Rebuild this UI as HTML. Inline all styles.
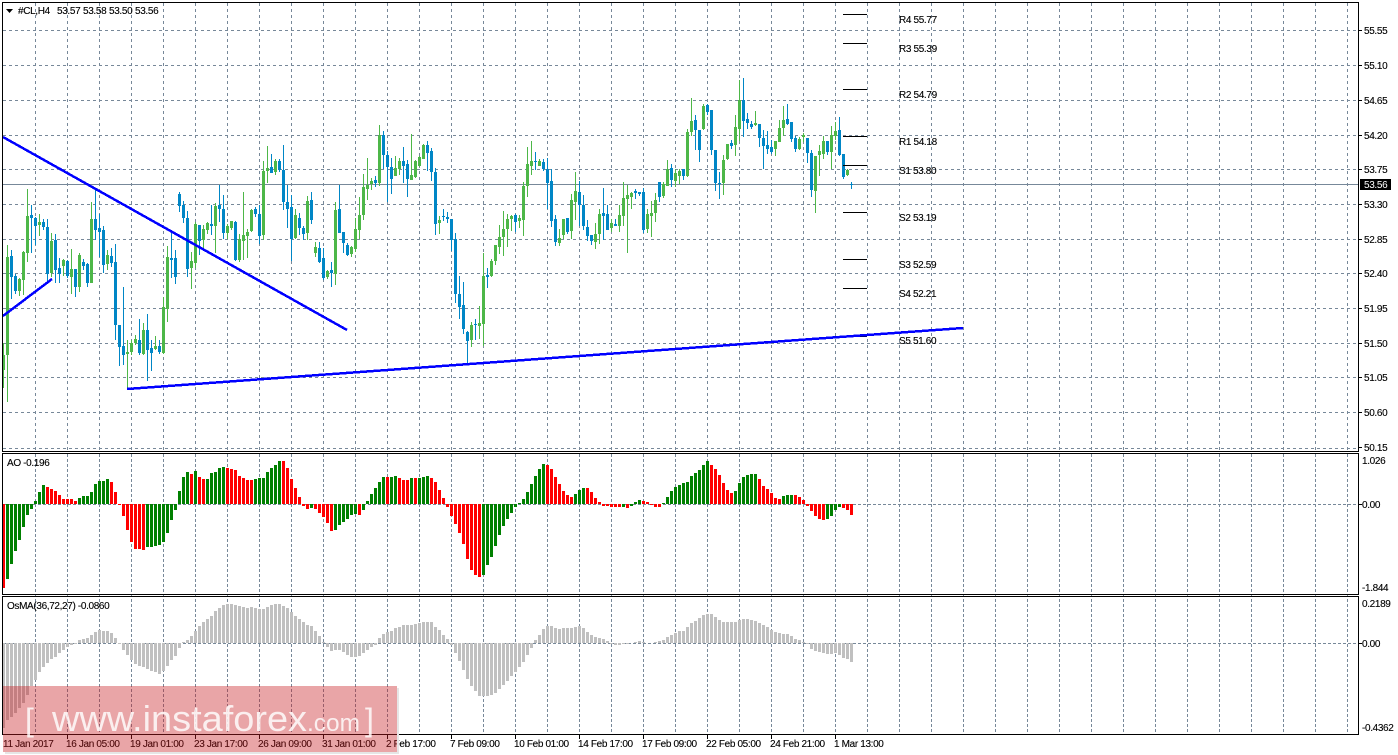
<!DOCTYPE html>
<html><head><meta charset="utf-8"><title>#CL,H4</title>
<style>
html,body{margin:0;padding:0;background:#fff;width:1398px;height:755px;overflow:hidden}
svg{display:block}
text{font-family:"Liberation Sans",sans-serif;font-size:10px;fill:#000;letter-spacing:-.35px;stroke:#000;stroke-width:.12px}
.c{shape-rendering:crispEdges;fill:none}
</style></head><body>
<svg width="1398" height="755" viewBox="0 0 1398 755" xmlns="http://www.w3.org/2000/svg">
<rect width="1398" height="755" fill="#fff"/>
<!-- grid -->
<path class="c" stroke="#778899" stroke-dasharray="3 3" d="M3 30.5H1358M3 65.5H1358M3 100.5H1358M3 135.5H1358M3 169.5H1358M3 204.5H1358M3 239.5H1358M3 273.5H1358M3 308.5H1358M3 343.5H1358M3 377.5H1358M3 412.5H1358M3 448.5H1358"/>
<path class="c" stroke="#778899" stroke-dasharray="3 3" d="M35.5 3V451M67.5 3V451M99.5 3V451M131.5 3V451M163.5 3V451M195.5 3V451M227.5 3V451M259.5 3V451M291.5 3V451M323.5 3V451M355.5 3V451M387.5 3V451M419.5 3V451M451.5 3V451M483.5 3V451M515.5 3V451M547.5 3V451M579.5 3V451M611.5 3V451M643.5 3V451M675.5 3V451M707.5 3V451M739.5 3V451M771.5 3V451M803.5 3V451M835.5 3V451M867.5 3V451M899.5 3V451M931.5 3V451M963.5 3V451M995.5 3V451M1027.5 3V451M1059.5 3V451M1091.5 3V451M1123.5 3V451M1155.5 3V451M1187.5 3V451M1219.5 3V451M1251.5 3V451M1283.5 3V451M1315.5 3V451M1347.5 3V451"/>
<path class="c" stroke="#778899" stroke-dasharray="3 2" d="M35.5 454V734M67.5 454V734M99.5 454V734M131.5 454V734M163.5 454V734M195.5 454V734M227.5 454V734M259.5 454V734M291.5 454V734M323.5 454V734M355.5 454V734M387.5 454V734M419.5 454V734M451.5 454V734M483.5 454V734M515.5 454V734M547.5 454V734M579.5 454V734M611.5 454V734M643.5 454V734M675.5 454V734M707.5 454V734M739.5 454V734M771.5 454V734M803.5 454V734M835.5 454V734M867.5 454V734M899.5 454V734M931.5 454V734M963.5 454V734M995.5 454V734M1027.5 454V734M1059.5 454V734M1091.5 454V734M1123.5 454V734M1155.5 454V734M1187.5 454V734M1219.5 454V734M1251.5 454V734M1283.5 454V734M1315.5 454V734M1347.5 454V734M3 504.5H1358M3 643.5H1358"/>
<!-- current price line -->
<path class="c" stroke="#778899" d="M3 184.5H1358"/>
<!-- green wicks -->
<path class="c" stroke="#4db748" d="M3.5 343V388M7.5 245V402M19.5 278V296M23.5 251V295M27.5 189V262M39.5 214V236M51.5 233V277M63.5 259V276M71.5 249V294M79.5 253V292M91.5 202V283M107.5 250V270M127.5 340V389M131.5 340V355M135.5 335V345M143.5 323V355M155.5 336V350M163.5 297V354M167.5 246V322M191.5 252V289M195.5 222V268M203.5 225V250M207.5 222V234M215.5 203V253M227.5 224V239M231.5 221V230M239.5 234V262M243.5 192V260M247.5 229V258M251.5 209V232M263.5 161V240M267.5 146V183M275.5 159V175M295.5 209V239M307.5 196V240M315.5 242V257M327.5 270V279M335.5 202V285M351.5 246V257M355.5 218V252M359.5 197V239M363.5 174V220M367.5 158V200M371.5 178V190M379.5 125V186M395.5 156V176M399.5 158V175M411.5 134V180M415.5 160V178M419.5 156V167M423.5 144V159M439.5 216V234M471.5 322V347M479.5 306V339M483.5 253V346M491.5 259V277M495.5 245V265M499.5 225V254M503.5 211V256M507.5 214V247M511.5 215V231M519.5 215V228M523.5 182V236M527.5 147V197M531.5 141V175M539.5 159V166M559.5 229V246M563.5 219V239M571.5 194V239M575.5 172V220M595.5 223V249M599.5 209V244M611.5 219V232M619.5 205V232M623.5 182V226M627.5 185V253M631.5 192V209M647.5 209V233M651.5 201V237M655.5 193V222M663.5 182V198M667.5 160V186M675.5 169V187M679.5 169V184M687.5 129V177M691.5 98V136M703.5 104V130M723.5 155V195M727.5 144V160M735.5 115V156M739.5 80V141M755.5 111V126M775.5 141V156M779.5 120V142M783.5 106V136M799.5 137V150M803.5 133V142M815.5 156V213M819.5 145V176M823.5 136V159M831.5 126V169M835.5 122V140M847.5 169V176"/>
<!-- green bodies -->
<path class="c" stroke="#4db748" stroke-width="3" d="M3.5 355V370M7.5 257V355M19.5 279V291M23.5 252V280M27.5 216V253M39.5 222V225M51.5 241V273M63.5 260V266M71.5 269V277M79.5 255V287M91.5 219V283M107.5 255V264M127.5 352V354M131.5 343V352M135.5 339V343M143.5 330V354M155.5 346V349M163.5 307V353M167.5 257V309M191.5 261V268M195.5 224V263M203.5 229V240M207.5 223V230M215.5 206V226M227.5 226V233M231.5 221V228M239.5 239V260M243.5 235V241M247.5 232V236M251.5 210V231M263.5 171V235M267.5 168V171M275.5 161V172M295.5 215V238M307.5 201V233M315.5 247V253M327.5 271V277M335.5 210V274M351.5 247V254M355.5 229V249M359.5 215V230M363.5 187V215M367.5 185V189M371.5 181V184M379.5 135V183M395.5 168V176M399.5 161V169M411.5 175V180M415.5 161V177M419.5 157V166M423.5 145V159M439.5 220V223M471.5 325V340M479.5 323V326M483.5 276V324M491.5 261V276M495.5 245V261M499.5 237V247M503.5 229V237M507.5 219V229M511.5 216V219M519.5 218V221M523.5 186V220M527.5 164V186M531.5 161V166M539.5 161V166M559.5 238V243M563.5 219V235M571.5 200V231M575.5 191V202M595.5 234V242M599.5 214V234M611.5 223V228M619.5 215V226M623.5 198V216M627.5 195V199M631.5 193V197M647.5 214V229M651.5 213V216M655.5 200V213M663.5 184V196M667.5 169V186M675.5 173V181M679.5 171V176M687.5 132V176M691.5 121V132M703.5 106V129M723.5 160V183M727.5 144V159M735.5 127V145M739.5 100V129M755.5 123V125M775.5 141V149M779.5 128V142M783.5 120V128M799.5 139V149M803.5 135V137M815.5 156V191M819.5 151V155M823.5 141V154M831.5 135V152M835.5 131V136M847.5 170V175"/>
<!-- blue wicks -->
<path class="c" stroke="#0086c6" d="M11.5 250V299M15.5 274V294M31.5 205V253M35.5 217V245M43.5 219V230M47.5 219V282M55.5 234V283M59.5 258V283M67.5 260V278M75.5 269V297M83.5 259V270M87.5 263V287M95.5 190V240M99.5 214V257M103.5 226V273M111.5 248V267M115.5 244V340M119.5 325V366M123.5 287V365M139.5 319V355M147.5 314V381M151.5 340V371M159.5 340V354M171.5 233V278M175.5 250V284M179.5 192V212M183.5 201V223M187.5 211V277M199.5 225V255M211.5 205V235M219.5 185V222M223.5 195V239M235.5 221V261M255.5 207V217M259.5 205V244M271.5 154V173M279.5 159V172M283.5 145V210M287.5 185V228M291.5 195V261M299.5 213V235M303.5 226V240M311.5 192V224M319.5 242V263M323.5 248V280M331.5 262V287M339.5 185V233M343.5 232V253M347.5 243V256M375.5 176V187M383.5 131V169M387.5 151V202M391.5 158V194M403.5 147V183M407.5 160V197M427.5 141V171M431.5 148V181M435.5 168V235M443.5 209V221M447.5 212V223M451.5 219V251M455.5 233V303M459.5 276V319M463.5 282V334M467.5 331V364M475.5 319V340M487.5 268V288M515.5 214V232M535.5 152V170M543.5 159V171M547.5 158V209M551.5 169V227M555.5 215V246M567.5 218V234M579.5 181V226M583.5 195V230M587.5 220V241M591.5 235V245M603.5 188V240M607.5 205V230M615.5 219V226M635.5 189V199M639.5 192V196M643.5 188V233M659.5 182V202M671.5 164V187M683.5 169V180M695.5 115V150M699.5 130V162M707.5 104V115M711.5 110V155M715.5 150V191M719.5 172V199M731.5 140V149M743.5 78V137M747.5 113V129M751.5 121V129M759.5 124V147M763.5 130V169M767.5 131V154M771.5 140V154M787.5 104V125M791.5 122V142M795.5 136V152M807.5 138V163M811.5 150V197M827.5 141V155M839.5 117V156M843.5 154V179M851.5 182V189"/>
<!-- blue bodies -->
<path class="c" stroke="#0086c6" stroke-width="3" d="M11.5 256V277M15.5 276V291M31.5 215V218M35.5 218V226M43.5 222V227M47.5 227V274M55.5 240V270M59.5 268V274M67.5 261V276M75.5 269V287M83.5 262V266M87.5 264V283M95.5 219V230M99.5 228V232M103.5 230V265M111.5 256V263M115.5 262V325M119.5 325V347M123.5 346V355M139.5 340V353M147.5 330V350M151.5 348V353M159.5 346V352M171.5 258V260M175.5 258V277M179.5 194V206M183.5 205V218M187.5 218V269M199.5 225V241M211.5 224V226M219.5 205V209M223.5 209V233M235.5 222V260M255.5 209V214M259.5 214V236M271.5 167V173M279.5 161V170M283.5 170V202M287.5 202V209M291.5 207V239M299.5 218V228M303.5 228V234M311.5 200V220M319.5 248V262M323.5 258V278M331.5 270V273M339.5 209V233M343.5 232V243M347.5 245V255M375.5 180V183M383.5 135V155M387.5 155V167M391.5 167V179M403.5 161V166M407.5 164V179M427.5 145V153M431.5 151V172M435.5 172V224M443.5 216V217M447.5 217V219M451.5 219V240M455.5 239V294M459.5 294V307M463.5 305V329M467.5 332V341M475.5 324V325M487.5 275V277M515.5 215V222M535.5 161V162M543.5 162V169M547.5 169V183M551.5 181V221M555.5 219V242M567.5 218V232M579.5 192V205M583.5 205V226M587.5 227V236M591.5 235V241M603.5 213V216M607.5 214V230M615.5 224V226M635.5 191V193M639.5 192V194M643.5 192V230M659.5 182V197M671.5 168V180M683.5 169V176M695.5 120V130M699.5 130V150M707.5 105V112M711.5 110V150M715.5 150V183M719.5 183V184M731.5 143V146M743.5 100V121M747.5 119V123M751.5 124V127M759.5 124V138M763.5 138V146M767.5 145V149M771.5 147V152M787.5 119V124M791.5 122V139M795.5 138V149M807.5 138V153M811.5 153V190M827.5 141V152M839.5 130V155M843.5 154V177M851.5 184V185"/>
<!-- pivots -->
<path class="c" stroke="#000" d="M843 14.5H867M843 43.5H867M843 89.5H867M843 136.5H867M843 165.5H867M843 212.5H867M843 259.5H867M843 288.5H867M843 336.5H867"/>
<!-- trend lines -->
<g stroke="#0000ff" stroke-width="2.5" fill="none" shape-rendering="crispEdges">
<path d="M3 137L347 330"/><path d="M3 316L52 279"/><path d="M127 389L963 328"/>
</g>
<!-- AO green -->
<path class="c" stroke="#008000" stroke-width="3" d="M7.5 504v75M11.5 504v60M15.5 504v47M19.5 504v36M23.5 504v23M27.5 504v11M31.5 504v5M35.5 504v-3M39.5 504v-12M43.5 504v-19M79.5 504v-6M83.5 504v-8M87.5 504v-8M91.5 504v-12M95.5 504v-20M99.5 504v-23M103.5 504v-23M107.5 504v-25M147.5 504v43M151.5 504v43M155.5 504v42M159.5 504v41M163.5 504v38M167.5 504v29M171.5 504v16M175.5 504v6M179.5 504v-13M183.5 504v-27M187.5 504v-32M195.5 504v-33M207.5 504v-25M211.5 504v-31M215.5 504v-32M219.5 504v-36M223.5 504v-37M255.5 504v-25M259.5 504v-26M263.5 504v-26M267.5 504v-32M271.5 504v-36M275.5 504v-39M279.5 504v-43M311.5 504v4M335.5 504v26M339.5 504v21M343.5 504v18M347.5 504v15M351.5 504v11M355.5 504v10M363.5 504v6M367.5 504v-3M371.5 504v-10M375.5 504v-16M379.5 504v-22M383.5 504v-27M391.5 504v-27M395.5 504v-28M411.5 504v-26M419.5 504v-26M423.5 504v-27M427.5 504v-28M483.5 504v71M487.5 504v61M491.5 504v53M495.5 504v42M499.5 504v31M503.5 504v22M507.5 504v15M511.5 504v9M515.5 504v3M519.5 504v-1M523.5 504v-5M527.5 504v-12M531.5 504v-20M535.5 504v-28M539.5 504v-35M543.5 504v-40M575.5 504v-10M579.5 504v-14M583.5 504v-16M623.5 504v3M631.5 504v2M635.5 504v-2M639.5 504v-4M663.5 504v-1M667.5 504v-7M671.5 504v-13M675.5 504v-17M679.5 504v-19M683.5 504v-21M687.5 504v-22M691.5 504v-28M695.5 504v-31M699.5 504v-34M703.5 504v-39M707.5 504v-43M735.5 504v-13M739.5 504v-21M743.5 504v-27M747.5 504v-29M751.5 504v-30M755.5 504v-30M783.5 504v-8M787.5 504v-9M791.5 504v-9M827.5 504v15M831.5 504v12M835.5 504v6M839.5 504v3"/>
<!-- AO red -->
<path class="c" stroke="#ff0000" stroke-width="3" d="M3.5 504v84M47.5 504v-17M51.5 504v-15M55.5 504v-13M59.5 504v-9M63.5 504v-5M67.5 504v-5M71.5 504v-5M75.5 504v-3M111.5 504v-22M115.5 504v-12M119.5 504v1M123.5 504v12M127.5 504v26M131.5 504v38M135.5 504v45M139.5 504v45M143.5 504v46M191.5 504v-30M199.5 504v-27M203.5 504v-25M227.5 504v-36M231.5 504v-35M235.5 504v-34M239.5 504v-28M243.5 504v-26M247.5 504v-24M251.5 504v-24M283.5 504v-43M287.5 504v-36M291.5 504v-25M295.5 504v-16M299.5 504v-7M303.5 504v2M307.5 504v5M315.5 504v5M319.5 504v9M323.5 504v13M327.5 504v19M331.5 504v27M359.5 504v11M387.5 504v-27M399.5 504v-26M403.5 504v-24M407.5 504v-24M415.5 504v-26M431.5 504v-26M435.5 504v-22M439.5 504v-14M443.5 504v-6M447.5 504v3M451.5 504v12M455.5 504v20M459.5 504v29M463.5 504v40M467.5 504v55M471.5 504v66M475.5 504v71M479.5 504v73M547.5 504v-39M551.5 504v-35M555.5 504v-27M559.5 504v-20M563.5 504v-13M567.5 504v-9M571.5 504v-7M587.5 504v-16M591.5 504v-12M595.5 504v-6M599.5 504v-2M603.5 504v2M607.5 504v2M611.5 504v3M615.5 504v3M619.5 504v3M627.5 504v4M643.5 504v-3M647.5 504v-2M651.5 504v1M655.5 504v3M659.5 504v3M711.5 504v-39M715.5 504v-35M719.5 504v-29M723.5 504v-21M727.5 504v-14M731.5 504v-11M759.5 504v-25M763.5 504v-18M767.5 504v-15M771.5 504v-11M775.5 504v-6M779.5 504v-5M795.5 504v-9M799.5 504v-7M803.5 504v-4M807.5 504v2M811.5 504v7M815.5 504v12M819.5 504v15M823.5 504v16M843.5 504v4M847.5 504v6M851.5 504v11"/>
<!-- OsMA -->
<path class="c" stroke="#c0c0c0" stroke-width="3" d="M3.5 643v85M7.5 643v77M11.5 643v74M15.5 643v70M19.5 643v65M23.5 643v60M27.5 643v52M31.5 643v43M35.5 643v37M39.5 643v29M43.5 643v24M47.5 643v20M51.5 643v16M55.5 643v14M59.5 643v10M63.5 643v7M67.5 643v4M71.5 643v2M75.5 643v1M79.5 643v-3M83.5 643v-4M87.5 643v-5M91.5 643v-8M95.5 643v-11M99.5 643v-13M103.5 643v-12M107.5 643v-12M111.5 643v-10M115.5 643v-5M119.5 643v1M123.5 643v7M127.5 643v12M131.5 643v17M135.5 643v21M139.5 643v23M143.5 643v24M147.5 643v26M151.5 643v28M155.5 643v29M159.5 643v31M163.5 643v28M167.5 643v23M171.5 643v17M175.5 643v13M179.5 643v5M183.5 643v-1M187.5 643v-3M191.5 643v-7M195.5 643v-12M199.5 643v-17M203.5 643v-21M207.5 643v-24M211.5 643v-27M215.5 643v-32M219.5 643v-35M223.5 643v-38M227.5 643v-39M231.5 643v-39M235.5 643v-38M239.5 643v-37M243.5 643v-36M247.5 643v-35M251.5 643v-36M255.5 643v-35M259.5 643v-34M263.5 643v-34M267.5 643v-36M271.5 643v-38M275.5 643v-39M279.5 643v-39M283.5 643v-37M287.5 643v-35M291.5 643v-31M295.5 643v-27M299.5 643v-24M303.5 643v-21M307.5 643v-18M311.5 643v-17M315.5 643v-12M319.5 643v-7M323.5 643v-1M327.5 643v4M331.5 643v8M335.5 643v7M339.5 643v7M343.5 643v9M347.5 643v12M351.5 643v14M355.5 643v14M359.5 643v13M363.5 643v10M367.5 643v7M371.5 643v4M375.5 643v2M379.5 643v-5M383.5 643v-9M387.5 643v-11M391.5 643v-12M395.5 643v-15M399.5 643v-16M403.5 643v-18M407.5 643v-18M411.5 643v-18M415.5 643v-19M419.5 643v-20M423.5 643v-21M427.5 643v-21M431.5 643v-21M435.5 643v-16M439.5 643v-13M443.5 643v-8M447.5 643v-4M451.5 643v2M455.5 643v10M459.5 643v18M463.5 643v27M467.5 643v36M471.5 643v43M475.5 643v48M479.5 643v53M483.5 643v53M487.5 643v53M491.5 643v52M495.5 643v50M499.5 643v46M503.5 643v42M507.5 643v38M511.5 643v33M515.5 643v29M519.5 643v24M523.5 643v19M527.5 643v12M531.5 643v5M535.5 643v-3M539.5 643v-8M543.5 643v-14M547.5 643v-17M551.5 643v-17M555.5 643v-15M559.5 643v-14M563.5 643v-15M567.5 643v-15M571.5 643v-15M575.5 643v-16M579.5 643v-17M583.5 643v-15M587.5 643v-11M591.5 643v-8M595.5 643v-6M599.5 643v-5M603.5 643v-4M607.5 643v-2M611.5 643v1M615.5 643v2M619.5 643v2M623.5 643v1M627.5 643v1M635.5 643v-1M639.5 643v-2M643.5 643v-1M655.5 643v-1M659.5 643v-2M663.5 643v-3M667.5 643v-6M671.5 643v-8M675.5 643v-10M679.5 643v-12M683.5 643v-12M687.5 643v-16M691.5 643v-20M695.5 643v-22M699.5 643v-25M703.5 643v-28M707.5 643v-29M711.5 643v-29M715.5 643v-26M719.5 643v-23M723.5 643v-21M727.5 643v-21M731.5 643v-21M735.5 643v-21M739.5 643v-23M743.5 643v-24M747.5 643v-24M751.5 643v-23M755.5 643v-22M759.5 643v-20M763.5 643v-18M767.5 643v-16M771.5 643v-13M775.5 643v-11M779.5 643v-10M783.5 643v-9M787.5 643v-9M791.5 643v-7M795.5 643v-4M799.5 643v-3M803.5 643v-1M807.5 643v1M811.5 643v6M815.5 643v8M819.5 643v9M823.5 643v10M827.5 643v11M831.5 643v11M835.5 643v10M839.5 643v12M843.5 643v15M847.5 643v16M851.5 643v19"/>
<!-- frames -->
<path class="c" stroke="#000" d="M2 2.5H1358.5V451.5H2.5V2M2 453.5H1358.5V594.5H2.5V453M2 596.5H1358.5V734.5H2.5V596"/>
<!-- price ticks -->
<path class="c" stroke="#000" d="M1359 30.5h3M1359 65.5h3M1359 100.5h3M1359 135.5h3M1359 169.5h3M1359 204.5h3M1359 239.5h3M1359 273.5h3M1359 308.5h3M1359 343.5h3M1359 377.5h3M1359 412.5h3M1359 447.5h3M1359 504.5h3M1359 643.5h3M67.5 735v4M131.5 735v4M195.5 735v4M259.5 735v4M323.5 735v4M387.5 735v4M451.5 735v4M515.5 735v4M579.5 735v4M643.5 735v4M707.5 735v4M771.5 735v4M835.5 735v4"/>
<!-- header -->
<polygon points="6,9 13,9 9.5,13" fill="#000"/>
<text x="18" y="14">#CL,H4</text><text x="57" y="14">53.57</text><text x="83" y="14">53.58</text><text x="109" y="14">53.50</text><text x="135" y="14">53.56</text>
<text x="7" y="466">AO -0.196</text>
<text x="7" y="609">OsMA(36,72,27) -0.0860</text>
<!-- pivots labels -->
<text x="899" y="23">R4 55.77</text><text x="899" y="52">R3 55.39</text><text x="899" y="98">R2 54.79</text><text x="899" y="145">R1 54.18</text><text x="899" y="174">S1 53.80</text><text x="899" y="221">S2 53.19</text><text x="899" y="268">S3 52.59</text><text x="899" y="297">S4 52.21</text><text x="899" y="344">S5 51.60</text>
<!-- price labels -->
<text x="1364" y="34">55.55</text><text x="1364" y="69">55.10</text><text x="1364" y="104">54.65</text><text x="1364" y="139">54.20</text><text x="1364" y="173">53.75</text>
<rect x="1360" y="179" width="31" height="11" fill="#000"/><text x="1364" y="188" style="fill:#fff;stroke:none">53.56</text>
<text x="1364" y="208">53.30</text><text x="1364" y="243">52.85</text><text x="1364" y="277">52.40</text><text x="1364" y="312">51.95</text><text x="1364" y="347">51.50</text><text x="1364" y="381">51.05</text><text x="1364" y="416">50.60</text><text x="1364" y="451">50.15</text>
<text x="1362" y="464">1.026</text><text x="1362" y="508">0.00</text><text x="1362" y="591">-1.844</text><text x="1362" y="607">0.2189</text><text x="1362" y="647">0.00</text><text x="1362" y="731">-0.4362</text>
<!-- time labels -->
<text x="3" y="747">11 Jan 2017</text><text x="66" y="747">16 Jan 05:00</text><text x="130" y="747">19 Jan 01:00</text><text x="194" y="747">23 Jan 17:00</text><text x="258" y="747">26 Jan 09:00</text><text x="322" y="747">31 Jan 01:00</text><text x="386" y="747">2 Feb 17:00</text><text x="450" y="747">7 Feb 09:00</text><text x="514" y="747">10 Feb 01:00</text><text x="578" y="747">14 Feb 17:00</text><text x="642" y="747">17 Feb 09:00</text><text x="706" y="747">22 Feb 05:00</text><text x="770" y="747">24 Feb 21:00</text><text x="834" y="747">1 Mar 13:00</text>
<!-- watermark -->
<rect x="5" y="752" width="394" height="2" fill="#e6e6e6"/><rect x="397" y="688" width="2" height="66" fill="#e6e6e6"/>
<rect x="3" y="686" width="394" height="66" fill="#c81e23" fill-opacity=".4"/>
<g fill-opacity=".82">
<text x="25" y="731" style="font-size:32px;fill:#fff;stroke:none;letter-spacing:0">[</text>
<text x="52" y="731" style="font-size:36px;fill:#fff;stroke:none;letter-spacing:0" textLength="255" lengthAdjust="spacingAndGlyphs">www.instaforex</text>
<text x="307" y="731" style="font-size:24.5px;fill:#fff;stroke:none;letter-spacing:0" textLength="53" lengthAdjust="spacingAndGlyphs">.com</text>
<text x="365" y="731" style="font-size:32px;fill:#fff;stroke:none;letter-spacing:0">]</text>
</g>
</svg>
</body></html>
